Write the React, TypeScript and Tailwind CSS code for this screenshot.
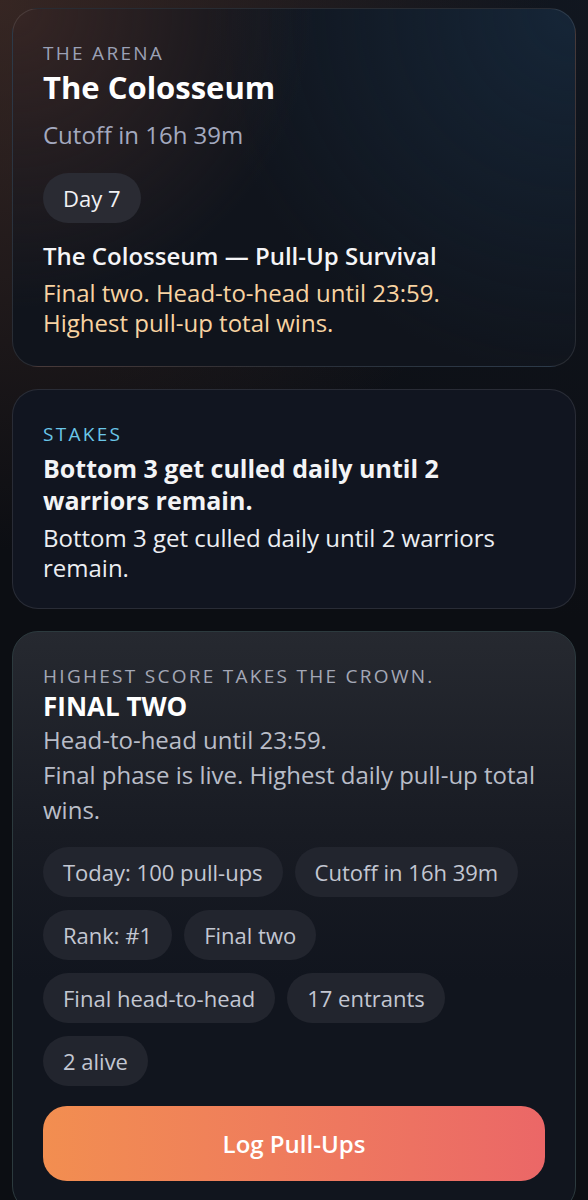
const pills = [
  ['Today: 100 pull-ups', 'Cutoff in 16h 39m'],
  ['Rank: #1', 'Final two'],
  ['Final head-to-head', '17 entrants'],
  ['2 alive'],
];

function Label({ children, className }: { children: string; className: string }) {
  return <div className={`text-[19px] leading-7 font-medium uppercase tracking-[0.12em] ${className}`}>{children}</div>;
}

export default function App() {
  return (
    <div
      className="min-h-[1200px] bg-[#0c0e13] bg-[radial-gradient(circle_at_0%_0%,rgba(68,46,40,0.75),transparent_40%),radial-gradient(circle_at_100%_0%,rgba(20,28,40,0.6),transparent_45%)] px-3 pt-2 pb-8 flex flex-col gap-[22px] text-white"
      style={{ fontFamily: '"Open Sans", "Noto Sans", sans-serif' }}
    >
      {/* arena header */}
      <section className="rounded-[26px] border border-white/10 bg-[#10141c] bg-[radial-gradient(circle_at_0%_0%,rgba(64,42,38,0.8),transparent_45%),radial-gradient(circle_at_100%_0%,rgba(26,52,78,0.55),transparent_55%)] px-[30px] pt-[30px] pb-[28px]">
        <Label className="text-[#9ba1b6]">The Arena</Label>
        <h1 className="text-[31px] leading-[40px] font-bold">The Colosseum</h1>
        <div className="mt-3 text-[24px] leading-8 text-[#a3a9bf]">Cutoff in 16h 39m</div>
        <div className="mt-[22px] inline-flex h-[50px] items-center rounded-full bg-[#2a2b33] px-5 text-[22px] font-medium text-[#f1f1f3]">
          Day 7
        </div>
        <div className="mt-[17px] text-[24px] leading-8 font-semibold text-[#f5f5f7]">The Colosseum — Pull-Up Survival</div>
        <p className="mt-[6px] text-[24px] leading-[30px] text-[#f8d3a2]">
          Final two. Head-to-head until 23:59.
          <br />
          Highest pull-up total wins.
        </p>
      </section>

      {/* stakes */}
      <section className="rounded-[26px] border border-white/10 bg-[#111520] px-[30px] pt-[30px] pb-[25px]">
        <Label className="text-[#6ac6e8]">Stakes</Label>
        <h2 className="mt-1 text-[25px] leading-8 font-bold text-[#f3f4f6]">Bottom 3 get culled daily until 2 warriors remain.</h2>
        <p className="mt-[7px] text-[24px] leading-[30px] text-[#eceef2]">Bottom 3 get culled daily until 2 warriors remain.</p>
      </section>

      {/* final phase */}
      <section className="rounded-[26px] border border-[#2c3a3e] bg-[#121620] bg-[linear-gradient(180deg,#262930_0%,#181b23_35%,#11151e_60%)] px-[30px] pt-[30px] pb-[30px]">
        <Label className="text-[#a4a8b6]">Highest score takes the crown.</Label>
        <h3 className="text-[26px] leading-8 font-bold">FINAL TWO</h3>
        <p className="text-[24px] leading-[35px] text-[#b9bdc8]">Head-to-head until 23:59.</p>
        <p className="text-[24px] leading-[35px] text-[#b9bdc8]">Final phase is live. Highest daily pull-up total wins.</p>

        <div className="mt-5 flex flex-col gap-[13px]">
          {pills.map((row, i) => (
            <div key={i} className="flex gap-3">
              {row.map((p) => (
                <span key={p} className="inline-flex h-[50px] items-center rounded-full bg-[#22252e] px-5 text-[22px] font-medium text-[#c3c7d2]">
                  {p}
                </span>
              ))}
            </div>
          ))}
        </div>

        <button className="mt-5 flex h-[75px] w-full items-center justify-center rounded-[24px] bg-linear-to-r from-[#f28e50] to-[#eb6767] text-[24px] font-semibold text-white">
          Log Pull-Ups
        </button>
      </section>
    </div>
  );
}
